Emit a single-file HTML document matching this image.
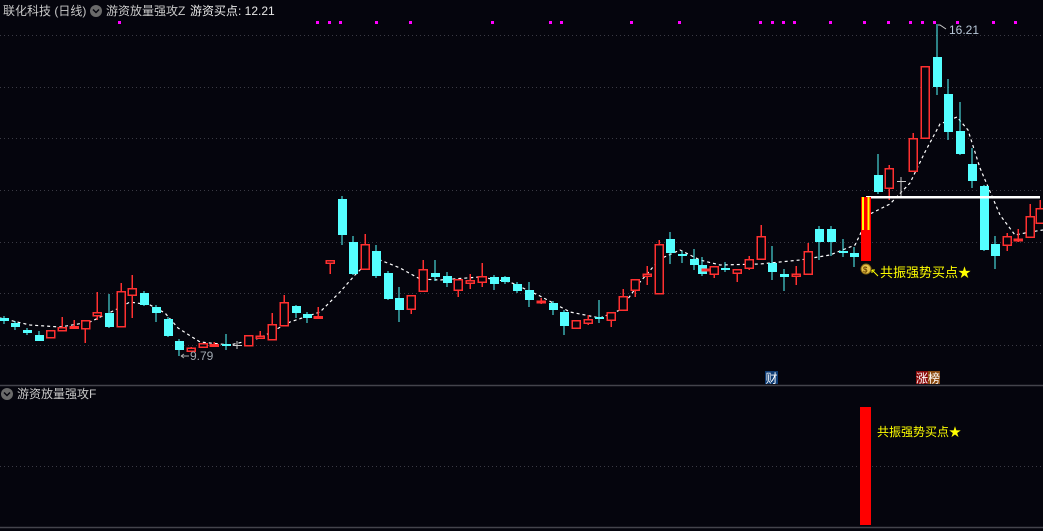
<!DOCTYPE html>
<html><head><meta charset="utf-8"><style>
html,body{margin:0;padding:0;background:#05050d;width:1043px;height:531px;overflow:hidden}
svg{display:block}
text{font-family:"Liberation Sans","Noto Sans CJK SC",sans-serif}
</style></head><body>
<svg width="1043" height="531" viewBox="0 0 1043 531" xmlns="http://www.w3.org/2000/svg">
<rect width="1043" height="531" fill="#05050d"/>
<g stroke="#3a3a44" stroke-dasharray="1 3" stroke-width="1">
<path d="M0 35.5H1043M0 87.5H1043M0 138.5H1043M0 190.5H1043M0 242.5H1043M0 293.5H1043M0 345.5H1043M0 466.5H1043"/>
</g>
<path d="M0 385.5H1043M0 527.5H1043" stroke="#44444c" stroke-width="1.5"/>
<text x="3" y="15" font-size="12" fill="#c8c8c8">联化科技 (日线)</text>
<circle cx="96" cy="11" r="6" fill="#6a6a6a"/><path d="M93 9.5l3 3 3-3" stroke="#05050d" stroke-width="1.5" fill="none"/>
<text x="106" y="15" font-size="12" fill="#c8c8c8">游资放量强攻Z</text>
<text x="190" y="15" font-size="12" fill="#e8e8e8">游资买点: 12.21</text>
<circle cx="7" cy="394" r="6" fill="#6a6a6a"/><path d="M4 392.5l3 3 3-3" stroke="#05050d" stroke-width="1.5" fill="none"/>
<text x="17" y="398" font-size="12" fill="#c8c8c8">游资放量强攻F</text>
<g fill="#ff00ff">
<rect x="118" y="21" width="3" height="3"/><rect x="316" y="21" width="3" height="3"/><rect x="328" y="21" width="3" height="3"/><rect x="339" y="21" width="3" height="3"/><rect x="375" y="21" width="3" height="3"/><rect x="409" y="21" width="3" height="3"/><rect x="491" y="21" width="3" height="3"/><rect x="549" y="21" width="3" height="3"/><rect x="560" y="21" width="3" height="3"/><rect x="630" y="21" width="3" height="3"/><rect x="678" y="21" width="3" height="3"/><rect x="759" y="21" width="3" height="3"/><rect x="771" y="21" width="3" height="3"/><rect x="782" y="21" width="3" height="3"/><rect x="793" y="21" width="3" height="3"/><rect x="829" y="21" width="3" height="3"/><rect x="863" y="21" width="3" height="3"/><rect x="887" y="21" width="3" height="3"/><rect x="909" y="21" width="3" height="3"/><rect x="921" y="21" width="3" height="3"/><rect x="933" y="21" width="3" height="3"/><rect x="956" y="21" width="3" height="3"/><rect x="992" y="21" width="3" height="3"/><rect x="1014" y="21" width="3" height="3"/>
</g>
<polyline fill="none" stroke="#ffffff" stroke-width="1.2" stroke-dasharray="3 3" points="0,318 30,325 60,327 90,322 115,310 130,302 150,305 165,313 178,328 200,342 230,345 260,338 290,322 320,312 340,292 355,275 368,262 380,260 400,268 420,279 440,280 480,277 510,282 540,296 570,312 600,318 620,310 640,282 660,259 680,250 700,260 720,265 760,264 800,260 830,255 855,245 870,214 890,204 910,183 925,152 940,124 957,117 968,130 980,168 1000,215 1015,235 1030,232 1043,230"/>
<g shape-rendering="crispEdges">
<g stroke="#54ffff" stroke-width="1">
<path d="M4 316V324M15 321V330M27 328V335M39 331V341M109 294V328M144 291V306M156 305V322M168 317V337M179 339V356M226 334V350M296 305V318M307 312V323M342 196V245M353 236V275M376 245V278M388 271V300M399 287V322M435 260V281M447 272V287M494 275V290M505 276V284M517 282V293M529 282V307M553 301V315M564 310V335M599 300V323M670 232V264M682 251V263M694 249V270M702 257V276M725 262V272M772 246V280M784 269V291M819 226V260M831 226V256M843 239V257M854 247V267M878 154V194M937 24V95M948 79V140M960 102V155M972 148V188M984 185V251M995 236V269"/>
</g>
<g fill="#54ffff">
<rect x="0" y="318" width="9" height="3"/><rect x="11" y="323" width="9" height="4"/><rect x="23" y="330" width="9" height="3"/><rect x="35" y="335" width="9" height="6"/><rect x="105" y="313" width="9" height="14"/><rect x="140" y="293" width="9" height="12"/><rect x="152" y="307" width="9" height="6"/><rect x="164" y="319" width="9" height="17"/><rect x="175" y="341" width="9" height="9"/><rect x="222" y="344" width="9" height="2"/><rect x="292" y="306" width="9" height="7"/><rect x="303" y="314" width="9" height="4"/><rect x="338" y="199" width="9" height="36"/><rect x="349" y="242" width="9" height="32"/><rect x="372" y="251" width="9" height="25"/><rect x="384" y="273" width="9" height="26"/><rect x="395" y="298" width="9" height="12"/><rect x="431" y="273" width="9" height="4"/><rect x="443" y="276" width="9" height="7"/><rect x="490" y="277" width="9" height="7"/><rect x="501" y="277" width="9" height="5"/><rect x="513" y="284" width="9" height="7"/><rect x="525" y="290" width="9" height="10"/><rect x="549" y="303" width="9" height="7"/><rect x="560" y="312" width="9" height="14"/><rect x="595" y="317" width="9" height="2"/><rect x="666" y="239" width="9" height="14"/><rect x="678" y="254" width="9" height="2"/><rect x="690" y="259" width="9" height="6"/><rect x="698" y="265" width="9" height="9"/><rect x="721" y="268" width="9" height="2"/><rect x="768" y="263" width="9" height="9"/><rect x="780" y="274" width="9" height="3"/><rect x="815" y="229" width="9" height="13"/><rect x="827" y="229" width="9" height="13"/><rect x="839" y="251" width="9" height="2"/><rect x="850" y="253" width="9" height="4"/><rect x="874" y="175" width="9" height="17"/><rect x="933" y="57" width="9" height="30"/><rect x="944" y="94" width="9" height="38"/><rect x="956" y="131" width="9" height="23"/><rect x="968" y="164" width="9" height="17"/><rect x="980" y="186" width="9" height="64"/><rect x="991" y="244" width="9" height="12"/>
</g>
<g stroke="#ff3030" stroke-width="1.5" fill="#05050d">
<path d="M62 317V331M74 320V328M85 320V343M97 292V320M121 283V327M132 275V318M191 347V352M214 342V346M260 331V338M272 313V340M284 295V326M318 307V319M330 260V274M365 234V270M411 295V314M423 260V291M458 279V297M470 274V289M482 263V287M541 298V304M576 320V329M588 315V325M611 312V327M623 289V310M635 279V297M647 266V285M659 240V294M706 269V271M714 266V278M737 269V282M749 256V270M761 225V259M796 266V285M808 243V275M889 165V200M913 133V171M1007 233V251M1018 229V242M1030 204V237M1040 200V223"/>
<rect x="46.5" y="330.5" width="8" height="7"/><rect x="58" y="327.5" width="8" height="3"/><rect x="70" y="326.5" width="8" height="1.5"/><rect x="81.5" y="320.5" width="8" height="8"/><rect x="93" y="312.5" width="8" height="3"/><rect x="117" y="291.5" width="8" height="35"/><rect x="128" y="288.5" width="8" height="6.5"/><rect x="187" y="348" width="8" height="3"/><rect x="199" y="343.5" width="8" height="3.5"/><rect x="210" y="344.5" width="8" height="1.5"/><rect x="244.5" y="335.5" width="8" height="10"/><rect x="256" y="336" width="8" height="2"/><rect x="268" y="324.5" width="8" height="15"/><rect x="280" y="302.5" width="8" height="23"/><rect x="314" y="316.5" width="8" height="1.5"/><rect x="326" y="260.5" width="8" height="2.5"/><rect x="361" y="244.5" width="8" height="24.5"/><rect x="407" y="295.5" width="8" height="13.5"/><rect x="419" y="269.5" width="8" height="21.5"/><rect x="454" y="279.5" width="8" height="10.5"/><rect x="466" y="280.5" width="8" height="2.5"/><rect x="478" y="276.5" width="8" height="5.5"/><rect x="537" y="301" width="8" height="1.5"/><rect x="572" y="320.5" width="8" height="7.5"/><rect x="584" y="319.5" width="8" height="3.5"/><rect x="607" y="312.5" width="8" height="7.5"/><rect x="619" y="296.5" width="8" height="13.5"/><rect x="631" y="279.5" width="8" height="10.5"/><rect x="643" y="274" width="8" height="2"/><rect x="655" y="244.5" width="8" height="49"/><rect x="702" y="269" width="8" height="1.5"/><rect x="710" y="266.5" width="8" height="7.5"/><rect x="733" y="269.5" width="8" height="3.5"/><rect x="745" y="259.5" width="8" height="8.5"/><rect x="757" y="236.5" width="8" height="22.5"/><rect x="792" y="274" width="8" height="2"/><rect x="804" y="251.5" width="8" height="22.5"/><rect x="885" y="168.5" width="8" height="19.5"/><rect x="909" y="138.5" width="8" height="32.5"/><rect x="921" y="66.5" width="8" height="71.5"/><rect x="1003" y="236.5" width="8" height="8.5"/><rect x="1014" y="239" width="8" height="1.5"/><rect x="1026" y="216.5" width="8" height="20.5"/><rect x="1036" y="208.5" width="8" height="14.5"/>
</g>
<g stroke="#cccccc" stroke-width="1"><path d="M237 341V349M233 345.5H242M901 177V196M897 181.5H906"/></g>
</g>
<rect x="866" y="196" width="174" height="2.5" fill="#ffffff"/>
<rect x="861" y="197" width="10" height="64" fill="#ff0000"/>
<rect x="862" y="197" width="2" height="33" fill="#ffff00"/><rect x="867.5" y="197" width="2" height="33" fill="#ffff00"/>
<circle cx="866" cy="269" r="5" fill="#e6c24a" stroke="#8a6a10"/><text x="863" y="272.5" font-size="8" fill="#6a4400" font-weight="bold">$</text>
<path d="M872 270l6 6M872 270v3M872 270h3" stroke="#ffff00" stroke-width="1"/>
<text x="880" y="277" font-size="13" fill="#ffff00">共振强势买点★</text>
<path d="M938 25h2l6 4" stroke="#cccccc" fill="none"/>
<text x="949" y="34" font-size="12" fill="#b8c8d8">16.21</text>
<path d="M181 356h8M181 356l3-2M181 356l3 2" stroke="#aaaaaa" fill="none"/>
<text x="190" y="360" font-size="12" fill="#a0a8b0">9.79</text>
<rect x="765" y="371" width="13" height="13" fill="#0e3c74"/><text x="765.5" y="382.5" font-size="12" fill="#ffffff">财</text>
<rect x="916" y="371" width="12" height="13" fill="#8a0a0a"/><rect x="928" y="371" width="12" height="13" fill="#8a4a10"/><text x="916" y="382.5" font-size="12" fill="#ffffff">涨榜</text>
<rect x="860" y="407" width="11" height="118" fill="#ff0000"/>
<text x="877" y="436" font-size="12" fill="#ffff00">共振强势买点★</text>
</svg>
</body></html>
